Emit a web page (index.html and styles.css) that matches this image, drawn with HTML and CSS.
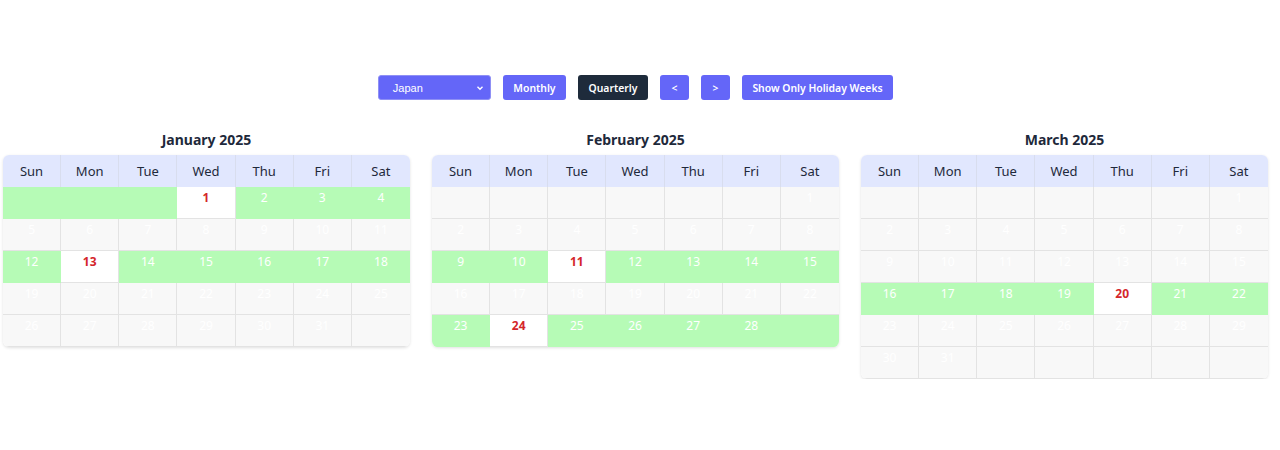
FILE: index.html
```html
<!DOCTYPE html>
<html>
<head>
<meta charset="utf-8">
<link rel="stylesheet" href="styles.css">
</head>
<body>
<div class="page">
  <div class="controls">
    <div class="select">Japan<svg class="chev" width="8" height="6" viewBox="0 0 8 6"><path d="M1.5 1.8 L4 4.2 L6.5 1.8" fill="none" stroke="#fff" stroke-width="1.4"/></svg></div>
    <button class="btn">Monthly</button>
    <button class="btn dark">Quarterly</button>
    <button class="btn sq">&lt;</button>
    <button class="btn sq">&gt;</button>
    <button class="btn">Show Only Holiday Weeks</button>
  </div>
  <div class="months">
    <div class="month">
      <h2 class="title">January 2025</h2>
      <div class="cal">
        <div class="hd">Sun</div><div class="hd">Mon</div><div class="hd">Tue</div><div class="hd">Wed</div><div class="hd">Thu</div><div class="hd">Fri</div><div class="hd">Sat</div>
        <div class="c g"></div><div class="c g"></div><div class="c g"></div><div class="c h">1</div><div class="c g">2</div><div class="c g">3</div><div class="c g">4</div>
        <div class="c">5</div><div class="c">6</div><div class="c">7</div><div class="c">8</div><div class="c">9</div><div class="c">10</div><div class="c">11</div>
        <div class="c g">12</div><div class="c h">13</div><div class="c g">14</div><div class="c g">15</div><div class="c g">16</div><div class="c g">17</div><div class="c g">18</div>
        <div class="c">19</div><div class="c">20</div><div class="c">21</div><div class="c">22</div><div class="c">23</div><div class="c">24</div><div class="c">25</div>
        <div class="c">26</div><div class="c">27</div><div class="c">28</div><div class="c">29</div><div class="c">30</div><div class="c">31</div><div class="c"></div>
      </div>
    </div>
    <div class="month">
      <h2 class="title">February 2025</h2>
      <div class="cal">
        <div class="hd">Sun</div><div class="hd">Mon</div><div class="hd">Tue</div><div class="hd">Wed</div><div class="hd">Thu</div><div class="hd">Fri</div><div class="hd">Sat</div>
        <div class="c"></div><div class="c"></div><div class="c"></div><div class="c"></div><div class="c"></div><div class="c"></div><div class="c">1</div>
        <div class="c">2</div><div class="c">3</div><div class="c">4</div><div class="c">5</div><div class="c">6</div><div class="c">7</div><div class="c">8</div>
        <div class="c g">9</div><div class="c g">10</div><div class="c h">11</div><div class="c g">12</div><div class="c g">13</div><div class="c g">14</div><div class="c g">15</div>
        <div class="c">16</div><div class="c">17</div><div class="c">18</div><div class="c">19</div><div class="c">20</div><div class="c">21</div><div class="c">22</div>
        <div class="c g">23</div><div class="c h">24</div><div class="c g">25</div><div class="c g">26</div><div class="c g">27</div><div class="c g">28</div><div class="c g"></div>
      </div>
    </div>
    <div class="month">
      <h2 class="title">March 2025</h2>
      <div class="cal">
        <div class="hd">Sun</div><div class="hd">Mon</div><div class="hd">Tue</div><div class="hd">Wed</div><div class="hd">Thu</div><div class="hd">Fri</div><div class="hd">Sat</div>
        <div class="c"></div><div class="c"></div><div class="c"></div><div class="c"></div><div class="c"></div><div class="c"></div><div class="c">1</div>
        <div class="c">2</div><div class="c">3</div><div class="c">4</div><div class="c">5</div><div class="c">6</div><div class="c">7</div><div class="c">8</div>
        <div class="c">9</div><div class="c">10</div><div class="c">11</div><div class="c">12</div><div class="c">13</div><div class="c">14</div><div class="c">15</div>
        <div class="c g">16</div><div class="c g">17</div><div class="c g">18</div><div class="c g">19</div><div class="c h">20</div><div class="c g">21</div><div class="c g">22</div>
        <div class="c">23</div><div class="c">24</div><div class="c">25</div><div class="c">26</div><div class="c">27</div><div class="c">28</div><div class="c">29</div>
        <div class="c">30</div><div class="c">31</div><div class="c"></div><div class="c"></div><div class="c"></div><div class="c"></div><div class="c"></div>
      </div>
    </div>
  </div>
</div>
</body>
</html>
```
FILE: styles.css
```css
* { box-sizing: border-box; }
body {
  margin: 0;
  background: #fff;
  font-family: "Noto Sans", "Open Sans", sans-serif;
  color: #1e293b;
}
.page {
  width: 1265px;
  margin-left: 3px;
  padding-top: 75px;
}
.controls {
  display: flex;
  justify-content: center;
  align-items: center;
  gap: 12px;
}
.select {
  width: 113px;
  height: 25px;
  background: #6466f8;
  border: 1px solid #8f90f5;
  border-radius: 3px;
  color: #fff;
  font-family: "Liberation Sans", Arial, sans-serif;
  font-size: 11px;
  display: flex;
  align-items: center;
  justify-content: space-between;
  padding: 0 6px 0 14px;
}
.btn {
  height: 25px;
  border: none;
  border-radius: 3px;
  background: #6466f8;
  color: #fff;
  font-family: "Noto Sans", sans-serif;
  font-weight: 600;
  font-size: 10.4px;
  padding: 0 10.5px;
}
.btn.dark { background: #1e2b3b; }
.btn.sq { width: 29px; padding: 0; }
.months {
  display: flex;
  gap: 22px;
  margin-top: 29px;
  align-items: flex-start;
}
.month { flex: 1; }
.title {
  margin: 0 0 4px;
  text-align: center;
  font-size: 14px;
  font-weight: 700;
  line-height: 22px;
  color: #1e293b;
}
.cal {
  display: grid;
  grid-template-columns: repeat(7, 1fr);
  border-radius: 6px;
  overflow: hidden;
  box-shadow: 0 1px 3px rgba(0,0,0,0.12);
}
.hd {
  height: 32px;
  background: #e1e7fe;
  display: flex;
  align-items: center;
  justify-content: center;
  font-size: 13px;
  color: #1e293b;
  border-right: 1px solid #d8ddee;
}
.hd:nth-child(7n) { border-right: none; }
.c {
  height: 32px;
  background: #f8f8f8;
  color: #fff;
  font-size: 12px;
  font-weight: 400;
  text-align: center;
  padding-top: 2px;
  line-height: 18px;
  border-right: 1px solid #e3e3e3;
  border-bottom: 1px solid #e3e3e3;
}
.c:nth-child(7n) { border-right: none; }
.c.g { background: #b6fbb6; border-color: #b6fbb6; }
.c.h { background: #fff; color: #d4262a; font-weight: 700; }
```
